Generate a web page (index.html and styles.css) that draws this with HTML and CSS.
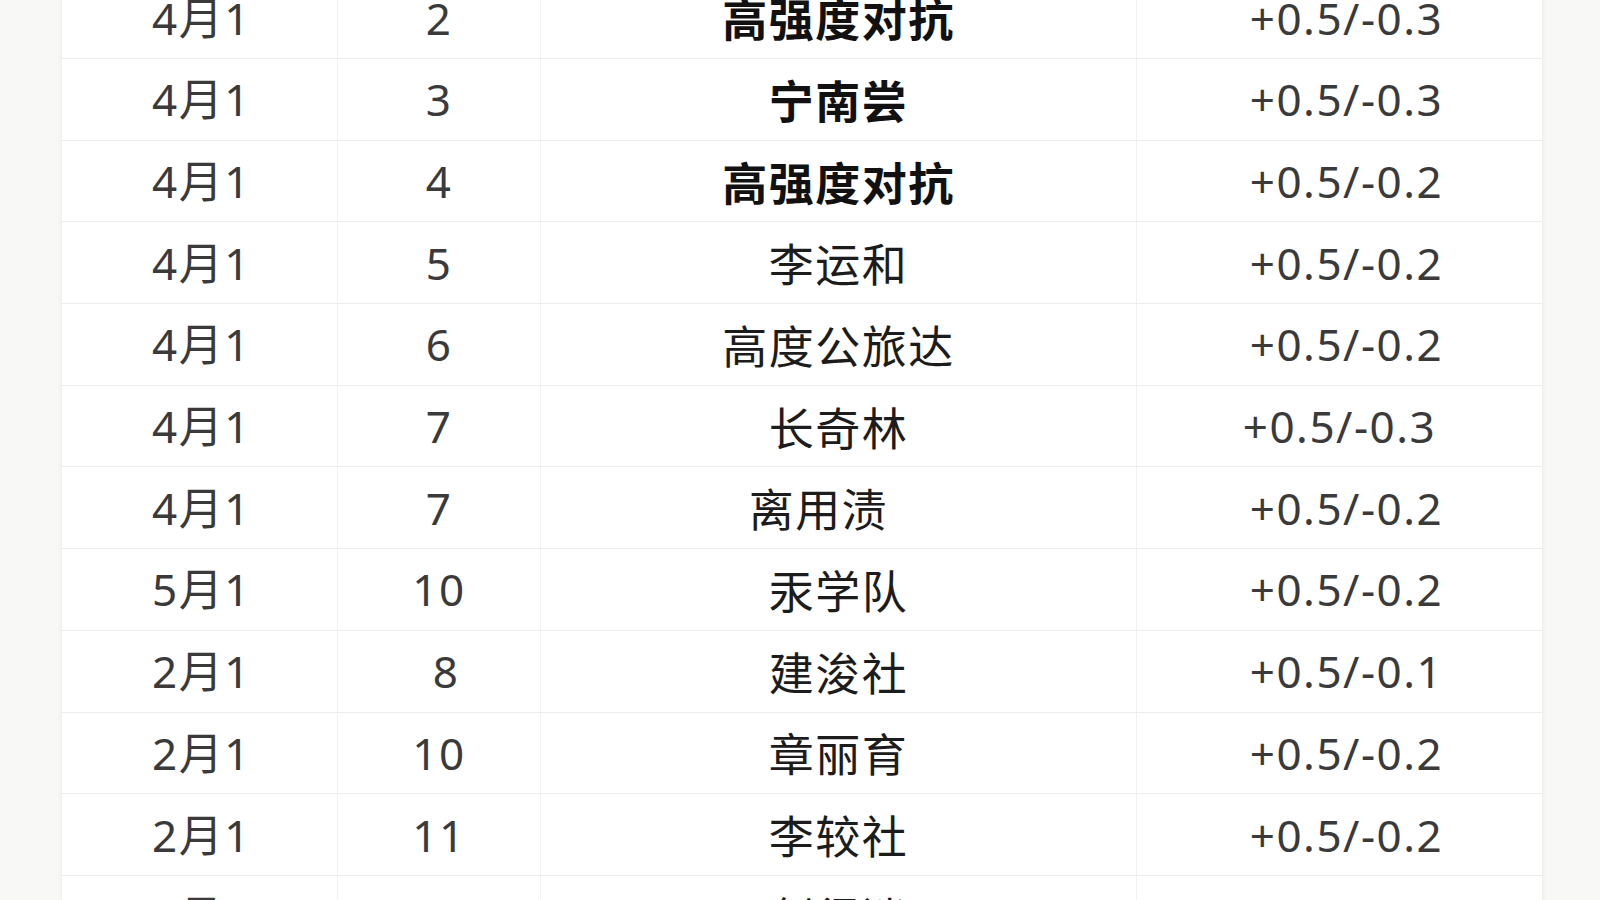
FILE: index.html
```html
<!DOCTYPE html>
<html lang="zh-CN">
<head>
<meta charset="utf-8">
<title>表</title>
<link rel="stylesheet" href="styles.css">
</head>
<body>
<div class="page">
  <table class="sheet">
    <colgroup>
      <col class="c-date"><col class="c-num"><col class="c-name"><col class="c-val">
    </colgroup>
    <tbody>
      <tr><td class="date">4月1</td><td class="num">2</td><td class="name strong">高强度对抗</td><td class="val">+0.5/-0.3</td></tr>
      <tr><td class="date">4月1</td><td class="num">3</td><td class="name strong">宁南尝</td><td class="val">+0.5/-0.3</td></tr>
      <tr><td class="date">4月1</td><td class="num">4</td><td class="name strong">高强度对抗</td><td class="val">+0.5/-0.2</td></tr>
      <tr><td class="date">4月1</td><td class="num">5</td><td class="name">李运和</td><td class="val">+0.5/-0.2</td></tr>
      <tr><td class="date">4月1</td><td class="num">6</td><td class="name">高度公旅达</td><td class="val">+0.5/-0.2</td></tr>
      <tr><td class="date">4月1</td><td class="num">7</td><td class="name">长奇林</td><td class="val shift-left">+0.5/-0.3</td></tr>
      <tr><td class="date">4月1</td><td class="num">7</td><td class="name shift-left">离用渍</td><td class="val">+0.5/-0.2</td></tr>
      <tr><td class="date">5月1</td><td class="num">10</td><td class="name">汞学队</td><td class="val">+0.5/-0.2</td></tr>
      <tr><td class="date">2月1</td><td class="num shift-right">8</td><td class="name">建浚社</td><td class="val">+0.5/-0.1</td></tr>
      <tr><td class="date">2月1</td><td class="num">10</td><td class="name">章丽育</td><td class="val">+0.5/-0.2</td></tr>
      <tr><td class="date">2月1</td><td class="num">11</td><td class="name">李较社</td><td class="val">+0.5/-0.2</td></tr>
      <tr><td class="date">2月1</td><td class="num">12</td><td class="name">剑得迷</td><td class="val">+0.5/-0.3</td></tr>
    </tbody>
  </table>
</div>
</body>
</html>
```

FILE: styles.css
```css
html, body {
  margin: 0;
  padding: 0;
  background: #f8f8f7;
  overflow: hidden;
}

.page {
  width: 1600px;
  height: 900px;
  overflow: hidden;
  padding-left: 61px;
  box-sizing: border-box;
}

.sheet {
  margin-top: -23.7px;
  width: 1481px;
  border-collapse: collapse;
  table-layout: fixed;
  background: #ffffff;
  box-shadow: 0 0 6px rgba(0, 0, 0, 0.04);
  font-family: "Noto Sans", "Noto Sans CJK SC", sans-serif;
  font-size: 44px;
  letter-spacing: 1.5px;
  color: #3a3a3a;
}

.c-date { width: 276px; }
.c-num  { width: 203px; }
.c-name { width: 596px; }
.c-val  { width: 406px; }

.sheet td {
  height: 80.7px;
  padding: 0;
  text-align: center;
  vertical-align: middle;
  line-height: 1;
  border-top: 1px solid #ececec;
  border-bottom: 1px solid #ececec;
  border-left: 1px solid #f0f0f0;
  border-right: 1px solid #f0f0f0;
}

.date { padding-left: 4px !important; }

.name {
  font-family: "Noto Sans CJK SC", sans-serif;
  font-size: 45px;
  color: #1c1c1c;
  font-weight: 400;
  letter-spacing: 1.5px;
}

.name.strong {
  font-weight: 700;
  color: #111111;
}

.val {
  padding-left: 14px !important;
}

.val.shift-left {
  padding-left: 0 !important;
}

.name.shift-left {
  padding-right: 40px !important;
}

.num.shift-right {
  padding-left: 14px !important;
}
```
